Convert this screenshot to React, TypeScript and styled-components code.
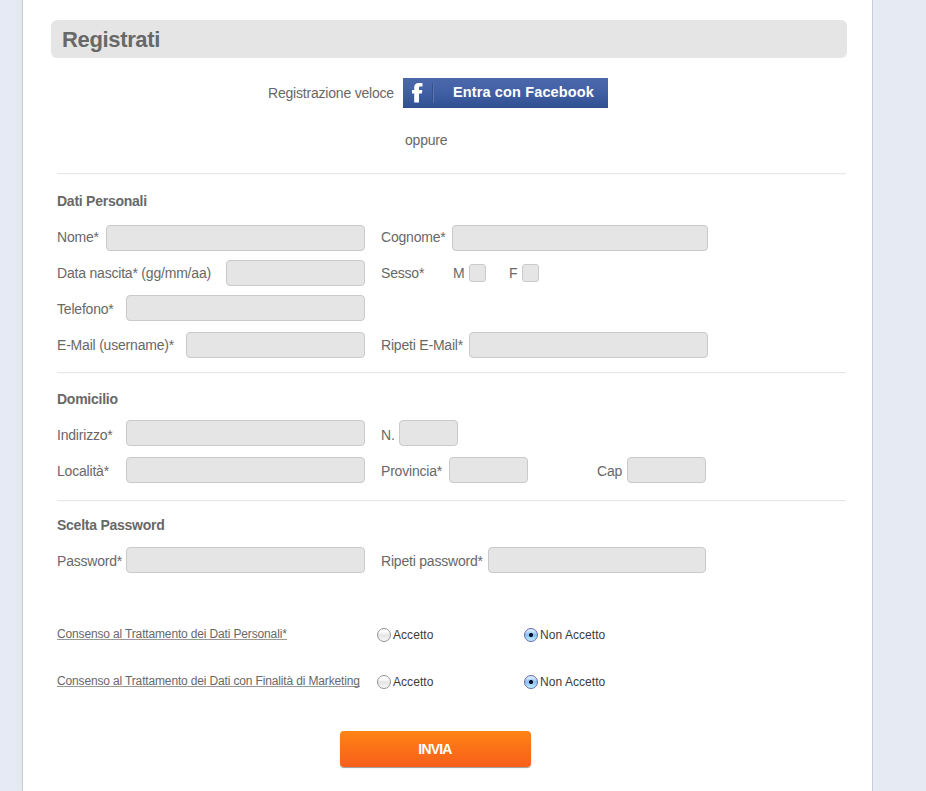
import React from "react";
import styled, { createGlobalStyle, css } from "styled-components";

const GlobalStyle = createGlobalStyle`
  *, *::before, *::after { box-sizing: border-box; }
  body {
    margin: 0;
    background: #e5eaf3;
    color: #686868;
    font: 14px/16px "Liberation Sans", Arial, sans-serif;
    letter-spacing: -0.2px;
  }
`;

const Page = styled.div`
  display: flex;
  height: 791px;
  overflow: hidden;
`;

const Gutter = styled.div`
  width: 22px;
  background: linear-gradient(to right, #e5eaf4 65%, #e4e9ed);
`;

const Panel = styled.main`
  width: 851px;
  padding: 20px 25px 0 28px;
  background: #fff;
  border: solid #c6cbe2;
  border-width: 0 1px;
`;

const TitleBar = styled.h1`
  height: 38px;
  margin: 0;
  padding-left: 11px;
  background: #e5e5e5;
  border-radius: 6px;
  font-size: 22px;
  line-height: 39px;
  letter-spacing: -0.35px;
`;

const QuickSignup = styled.div`
  display: flex;
  gap: 9px;
  height: 30px;
  margin: 20px 0 0 217px;
`;

const QuickText = styled.span`
  width: 126px;
  padding-top: 7px;
  white-space: nowrap;
`;

const FacebookButton = styled.button`
  display: flex;
  align-items: center;
  width: 205px;
  height: 30px;
  padding: 0;
  border: 0;
  background: linear-gradient(#4b68ab, #4160a4 50%, #304f91);
  color: #fff;
  font: bold 14.5px/18px "Liberation Sans", Arial, sans-serif;
  letter-spacing: 0.13px;
`;

const FacebookMark = styled.span`
  display: flex;
  width: 31px;
  height: 20px;
  padding-left: 9px;
  border-right: 1px solid #5874af;
  box-shadow: inset -1px 0 #35528f;
`;

const FacebookText = styled.span`
  padding: 0 0 2px 19px;
  white-space: nowrap;
`;

const Or = styled.p`
  margin: 24px 0 0 354px;
`;

const Section = styled.section<{ $space: number }>`
  width: 789px;
  margin: ${(p) => p.$space}px 0 0 6px;
  border-top: 1px solid #e9e9e9;
  box-shadow: inset 0 1px #f9f9f9;
`;

const SectionTitle = styled.h2<{ $top?: number }>`
  margin: ${(p) => p.$top ?? 19}px 0 16px;
  font-size: 14px;
  line-height: 16px;
  letter-spacing: -0.25px;
`;

const Row = styled.div<{ $gap?: number }>`
  display: grid;
  grid-template-columns: 308px 1fr;
  column-gap: 16px;
  height: 26px;
  margin-top: ${(p) => p.$gap ?? 0}px;
`;

const Cell = styled.div`
  display: flex;
  align-items: flex-start;
`;

const Label = styled.label<{ $width: number; $drop: number }>`
  flex: none;
  width: ${(p) => p.$width}px;
  padding-top: ${(p) => p.$drop}px;
  white-space: nowrap;
`;

const field = css`
  flex: none;
  margin: 0;
  appearance: none;
  background: #e5e5e5;
  border: 1px solid #cacaca;
  outline: none;
`;

const Input = styled.input<{ $width: number; $after?: number }>`
  ${field}
  width: ${(p) => p.$width}px;
  height: 26px;
  margin-right: ${(p) => p.$after ?? 0}px;
  border-radius: 4px;
`;

const Check = styled.input<{ $after?: number }>`
  ${field}
  width: 17px;
  height: 18px;
  margin: 4px ${(p) => p.$after ?? 0}px 0 0;
  border-radius: 3px;
`;

const Consents = styled.div`
  display: grid;
  gap: 31px;
  margin: 54px 0 0 6px;
`;

const ConsentRow = styled.div`
  display: grid;
  grid-template-columns: 320px 147px 120px;
  height: 16px;
  font-size: 12px;
  line-height: 14px;
`;

const ConsentLink = styled.a`
  justify-self: start;
  height: 13px;
  border-bottom: 1px solid #999;
  line-height: 14px;
  letter-spacing: -0.15px;
  white-space: nowrap;
`;

const Choice = styled.label`
  display: flex;
  gap: 2px;
  padding-top: 1px;
  color: #3b3b3b;
  letter-spacing: 0.05px;
  white-space: nowrap;
`;

const Radio = styled.input`
  width: 14px;
  height: 14px;
  margin: 0;
  appearance: none;
  border: 1px solid #939393;
  border-radius: 50%;
  background: linear-gradient(#fff 20%, #e5e5e5 55%, #f8f8f8);

  &:checked {
    border-color: #6268a5;
    background:
      radial-gradient(circle, #05122d 1.6px, transparent 2.5px),
      linear-gradient(#dceefd 10%, #88bef2 50%, #c4f0ff);
  }
`;

const Submit = styled.button`
  display: block;
  width: 191px;
  height: 36px;
  margin: 41px 0 0 289px;
  padding: 0 1px 0 0;
  border: 0;
  border-radius: 4px;
  background: linear-gradient(#ff8314, #f75e1b);
  box-shadow: 0 1px 1px #999;
  color: #fff;
  font: bold 14px/36px "Liberation Sans", Arial, sans-serif;
  letter-spacing: -0.8px;
`;

const consents = [
  "Consenso al Trattamento dei Dati Personali*",
  "Consenso al Trattamento dei Dati con Finalità di Marketing",
];

export default function App() {
  return (
    <Page>
      <GlobalStyle />
      <Gutter />
      <Panel>
        <TitleBar>Registrati</TitleBar>
        <QuickSignup>
          <QuickText>Registrazione veloce</QuickText>
          <FacebookButton>
            <FacebookMark>
              <svg width="11" height="20" viewBox="0 0 11 20" fill="#fff" aria-hidden="true">
                <path d="M2.2 19.5V10.5H0V7h2.2V4.5C2.200 1.600 3.800 0 6.600 0H10.500V3.500H8.200C7.300 3.500 7 4 7 4.800V7h3.300l-.4 3.500H7v9z" />
              </svg>
            </FacebookMark>
            <FacebookText>Entra con Facebook</FacebookText>
          </FacebookButton>
        </QuickSignup>
        <Or>oppure</Or>

        <Section $space={25}>
          <SectionTitle>Dati Personali</SectionTitle>
          <Row>
            <Cell>
              <Label $width={49} $drop={4}>Nome*</Label>
              <Input $width={259} />
            </Cell>
            <Cell>
              <Label $width={71} $drop={4}>Cognome*</Label>
              <Input $width={256} />
            </Cell>
          </Row>
          <Row $gap={9}>
            <Cell>
              <Label $width={169} $drop={5}>Data nascita* (gg/mm/aa)</Label>
              <Input $width={139} />
            </Cell>
            <Cell>
              <Label $width={72} $drop={5}>Sesso*</Label>
              <Label $width={16} $drop={5}>M</Label>
              <Check type="checkbox" $after={23} />
              <Label $width={13} $drop={5}>F</Label>
              <Check type="checkbox" />
            </Cell>
          </Row>
          <Row $gap={9}>
            <Cell>
              <Label $width={69} $drop={6}>Telefono*</Label>
              <Input $width={239} />
            </Cell>
          </Row>
          <Row $gap={11}>
            <Cell>
              <Label $width={129} $drop={5}>E-Mail (username)*</Label>
              <Input $width={179} />
            </Cell>
            <Cell>
              <Label $width={88} $drop={5}>Ripeti E-Mail*</Label>
              <Input $width={239} />
            </Cell>
          </Row>
        </Section>

        <Section $space={14}>
          <SectionTitle $top={18}>Domicilio</SectionTitle>
          <Row $gap={-3}>
            <Cell>
              <Label $width={69} $drop={7}>Indirizzo*</Label>
              <Input $width={239} />
            </Cell>
            <Cell>
              <Label $width={18} $drop={7}>N.</Label>
              <Input $width={59} />
            </Cell>
          </Row>
          <Row $gap={11}>
            <Cell>
              <Label $width={69} $drop={6}>Località*</Label>
              <Input $width={239} />
            </Cell>
            <Cell>
              <Label $width={68} $drop={6}>Provincia*</Label>
              <Input $width={79} $after={69} />
              <Label $width={30} $drop={6}>Cap</Label>
              <Input $width={79} />
            </Cell>
          </Row>
        </Section>

        <Section $space={17}>
          <SectionTitle $top={16}>Scelta Password</SectionTitle>
          <Row $gap={-2}>
            <Cell>
              <Label $width={69} $drop={6}>Password*</Label>
              <Input $width={239} />
            </Cell>
            <Cell>
              <Label $width={107} $drop={6}>Ripeti password*</Label>
              <Input $width={218} />
            </Cell>
          </Row>
        </Section>

        <Consents>
          {consents.map((text, i) => (
            <ConsentRow key={text}>
              <ConsentLink>{text}</ConsentLink>
              <Choice>
                <Radio type="radio" name={`consent-${i}`} />
                Accetto
              </Choice>
              <Choice>
                <Radio type="radio" name={`consent-${i}`} defaultChecked />
                Non Accetto
              </Choice>
            </ConsentRow>
          ))}
        </Consents>
        <Submit>INVIA</Submit>
      </Panel>
    </Page>
  );
}
